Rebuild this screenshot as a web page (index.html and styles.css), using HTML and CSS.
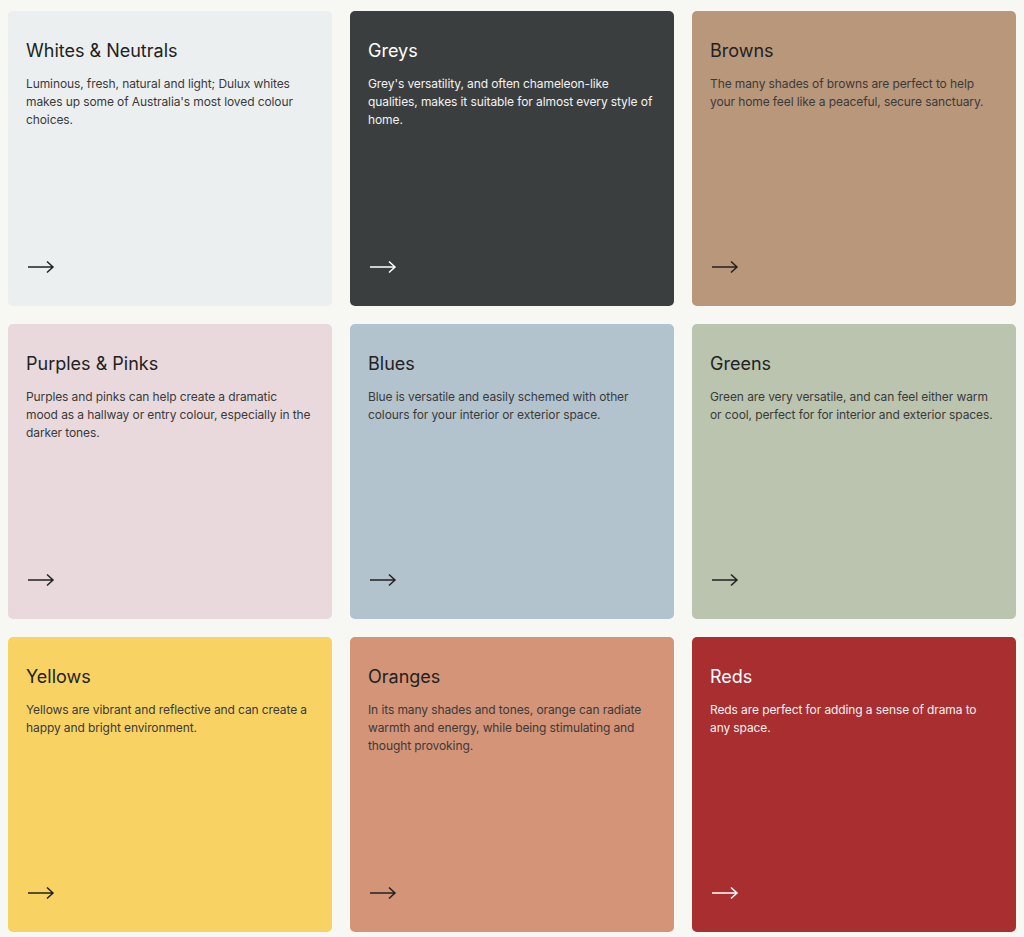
FILE: index.html
```html
<!DOCTYPE html>
<html lang="en">
<head>
  <meta charset="UTF-8">
  <meta name="viewport" content="width=device-width, initial-scale=1.0">
  <title>Colour families</title>
  <link rel="stylesheet" href="styles.css">
</head>
<body>
  <div class="families">
    <a class="family whites" href="#">
      <h3>Whites &amp; Neutrals</h3>
      <p>Luminous, fresh, natural and light; Dulux whites makes up some of Australia's most loved colour choices.</p>
      <svg class="arrow" viewBox="0 0 28 14"><path d="M1 7h25M20 1.5l6 5.5-6 5.5"/></svg>
    </a>
    <a class="family greys dark" href="#">
      <h3>Greys</h3>
      <p>Grey's versatility, and often chameleon-like qualities, makes it suitable for almost every style of home.</p>
      <svg class="arrow" viewBox="0 0 28 14"><path d="M1 7h25M20 1.5l6 5.5-6 5.5"/></svg>
    </a>
    <a class="family browns" href="#">
      <h3>Browns</h3>
      <p>The many shades of browns are perfect to help your home feel like a peaceful, secure sanctuary.</p>
      <svg class="arrow" viewBox="0 0 28 14"><path d="M1 7h25M20 1.5l6 5.5-6 5.5"/></svg>
    </a>
    <a class="family purples" href="#">
      <h3>Purples &amp; Pinks</h3>
      <p>Purples and pinks can help create a dramatic mood as a hallway or entry colour, especially in the darker tones.</p>
      <svg class="arrow" viewBox="0 0 28 14"><path d="M1 7h25M20 1.5l6 5.5-6 5.5"/></svg>
    </a>
    <a class="family blues" href="#">
      <h3>Blues</h3>
      <p>Blue is versatile and easily schemed with other colours for your interior or exterior space.</p>
      <svg class="arrow" viewBox="0 0 28 14"><path d="M1 7h25M20 1.5l6 5.5-6 5.5"/></svg>
    </a>
    <a class="family greens" href="#">
      <h3>Greens</h3>
      <p>Green are very versatile, and can feel either warm or cool, perfect for for interior and exterior spaces.</p>
      <svg class="arrow" viewBox="0 0 28 14"><path d="M1 7h25M20 1.5l6 5.5-6 5.5"/></svg>
    </a>
    <a class="family yellows" href="#">
      <h3>Yellows</h3>
      <p>Yellows are vibrant and reflective and can create a happy and bright environment.</p>
      <svg class="arrow" viewBox="0 0 28 14"><path d="M1 7h25M20 1.5l6 5.5-6 5.5"/></svg>
    </a>
    <a class="family oranges" href="#">
      <h3>Oranges</h3>
      <p>In its many shades and tones, orange can radiate warmth and energy, while being stimulating and thought provoking.</p>
      <svg class="arrow" viewBox="0 0 28 14"><path d="M1 7h25M20 1.5l6 5.5-6 5.5"/></svg>
    </a>
    <a class="family reds dark" href="#">
      <h3>Reds</h3>
      <p>Reds are perfect for adding a sense of drama to any space.</p>
      <svg class="arrow" viewBox="0 0 28 14"><path d="M1 7h25M20 1.5l6 5.5-6 5.5"/></svg>
    </a>
  </div>
</body>
</html>
```

FILE: styles.css
```css
body {
  font-family: Inter, "Noto Sans", sans-serif;
  background: #f7f7f4;
  margin: 0;
  padding: 11px 8px 6px;
}
.families {
  display: grid;
  grid-template-columns: repeat(3, 1fr);
  grid-auto-rows: 295px;
  gap: 18px;
}
.family {
  display: flex;
  flex-direction: column;
  padding: 29px 21px 32px 18px;
  border-radius: 5px;
  color: #222;
  text-decoration: none;
}
.family h3 {
  margin: 0 0 13px;
  font-size: 18px;
  font-weight: 400;
  line-height: 22px;
}
.family p {
  margin: 0;
  font-size: 12px;
  line-height: 18px;
  letter-spacing: -0.1px;
  color: #3a3a3a;
}
.arrow {
  margin-top: auto;
  margin-left: 1px;
  width: 28px;
  height: 14px;
  fill: none;
  stroke: #222;
  stroke-width: 1.5;
}
.dark { color: #fff; }
.dark p { color: #f2f2f2; }
.dark .arrow { stroke: #fff; }

.whites { background: #eceff0; }
.greys { background: #3b3e3f; }
.browns { background: #b9977a; }
.purples { background: #e9d9dc; }
.blues { background: #b3c3cd; }
.greens { background: #bac4af; }
.yellows { background: #f8d363; }
.oranges { background: #d49477; }
.reds { background: #a92e30; }
```
